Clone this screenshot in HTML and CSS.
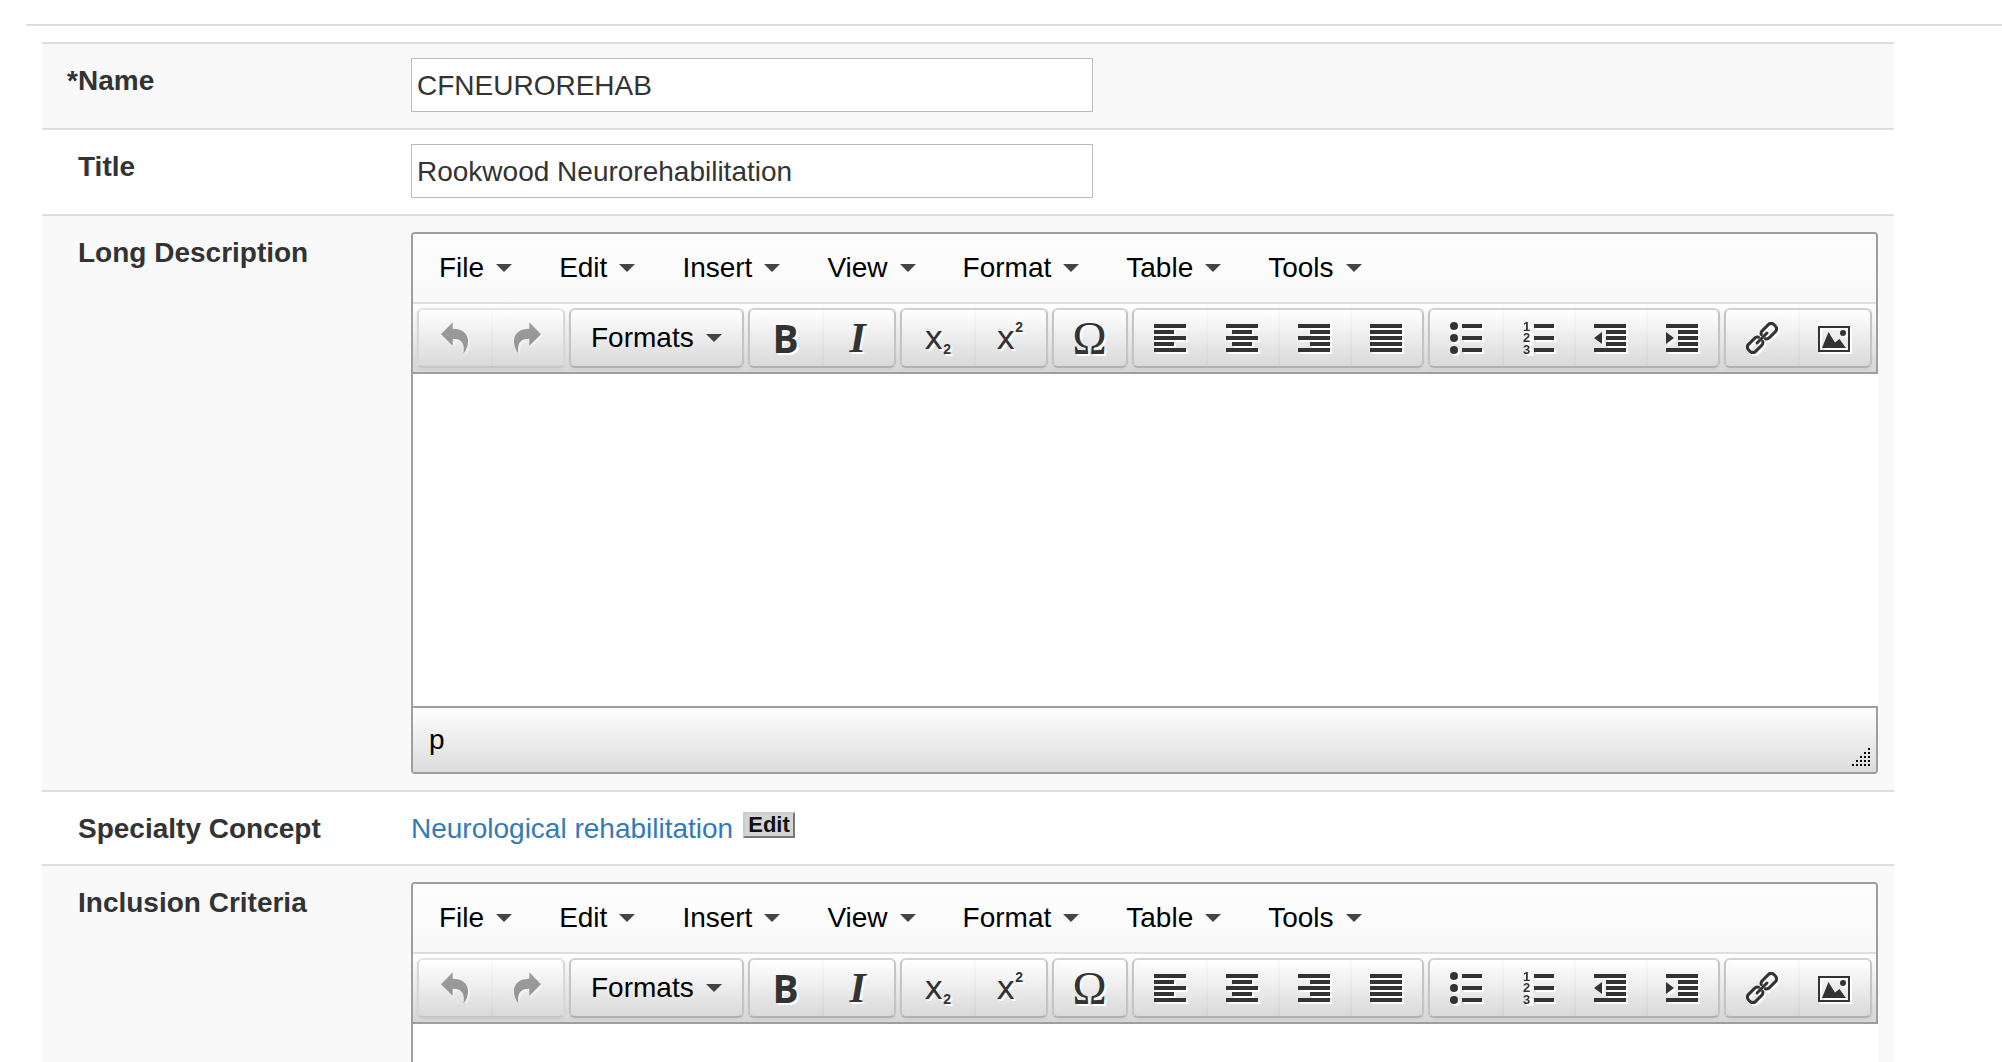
FILE: index.html
```html
<!DOCTYPE html>
<html lang="en">
<head>
<meta charset="utf-8">
<title>Service details</title>
<link rel="stylesheet" href="styles.css">
</head>
<body>
<svg class="sprite" aria-hidden="true">
  <symbol id="undo" viewBox="0 0 32 32"><path d="M2 12.3 13.7.3v6.4C22.500 6.700 29.300 11 29 19.500c0 4.500-1.700 8.500-4.500 11.800C26 23 24 16.700 13.700 16.700v7z"/></symbol>
  <symbol id="redo" viewBox="0 0 32 32"><path transform="matrix(-1 0 0 1 32 0)" d="M2 12.3 13.7.3v6.4C22.500 6.700 29.300 11 29 19.500c0 4.500-1.700 8.500-4.500 11.800C26 23 24 16.700 13.700 16.700v7z"/></symbol>
  <symbol id="left" viewBox="0 0 32 32"><path d="M0 2h32v4H0zM0 8h20v4H0zM0 14h32v4H0zM0 20h20v4H0zM0 26h32v4H0z"/></symbol>
  <symbol id="center" viewBox="0 0 32 32"><path d="M0 2h32v4H0zM6 8h20v4H6zM0 14h32v4H0zM6 20h20v4H6zM0 26h32v4H0z"/></symbol>
  <symbol id="right" viewBox="0 0 32 32"><path d="M0 2h32v4H0zM12 8h20v4H12zM0 14h32v4H0zM12 20h20v4H12zM0 26h32v4H0z"/></symbol>
  <symbol id="justify" viewBox="0 0 32 32"><path d="M0 2h32v4H0zM0 8h32v4H0zM0 14h32v4H0zM0 20h32v4H0zM0 26h32v4H0z"/></symbol>
  <symbol id="bullets" viewBox="0 0 32 32"><circle cx="4" cy="4" r="4"/><circle cx="4" cy="16" r="4"/><circle cx="4" cy="28" r="4"/><path d="M12 2h20v4H12zM12 14h20v4H12zM12 26h20v4H12z"/></symbol>
  <symbol id="numbers" viewBox="0 0 32 32"><text x="1" y="9">1</text><text x="1" y="20">2</text><text x="1" y="32">3</text><path d="M12 2h20v4H12zM12 14h20v4H12zM12 26h20v4H12z"/></symbol>
  <symbol id="outdent" viewBox="0 0 32 32"><path d="M0 2h32v4H0zM12 8h20v4H12zM12 14h20v4H12zM12 20h20v4H12zM0 26h32v4H0zM8 10v12L0 16z"/></symbol>
  <symbol id="indent" viewBox="0 0 32 32"><path d="M0 2h32v4H0zM12 8h20v4H12zM12 14h20v4H12zM12 20h20v4H12zM0 26h32v4H0zM0 10v12l8-6z"/></symbol>
  <symbol id="link" viewBox="0 0 32 32"><g fill="none" stroke="#333" stroke-width="3" stroke-linecap="round" transform="rotate(-45 16 16)"><path d="M14 19q-1 2-3.500 2H2q-4 0-4-5t4-5h8.500q2.500 0 3.500 2"/><path d="M18 19q1 2 3.500 2H30q4 0 4-5t-4-5h-8.500q-2.500 0-3.500 2"/><path d="M9 16h14"/></g></symbol>
  <symbol id="image" viewBox="0 0 32 32"><path fill-rule="evenodd" d="M0 4h32v26H0zM2 6v22h28V6z"/><circle cx="25" cy="11" r="3"/><path d="M4 26 10.500 10 17 20.500 21.500 17 28 26z"/></symbol>
  <symbol id="grip" viewBox="0 0 18 18"><path d="M16 0h2v2h-2zM12 4h2v2h-2zM16 4h2v2h-2zM8 8h2v2H8zM12 8h2v2h-2zM16 8h2v2h-2zM4 12h2v2H4zM8 12h2v2H8zM12 12h2v2h-2zM16 12h2v2h-2zM0 16h2v2H0zM4 16h2v2H4zM8 16h2v2H8zM12 16h2v2h-2zM16 16h2v2h-2z"/></symbol>
</svg>

<hr class="rule">
<form class="details">
  <div class="row">
    <label class="label" for="name"><span class="mark">*</span>Name</label>
    <input class="field" id="name" type="text" value="CFNEUROREHAB">
  </div>
  <div class="row">
    <label class="label" for="title"><span class="mark"></span>Title</label>
    <input class="field" id="title" type="text" value="Rookwood Neurorehabilitation">
  </div>
  <div class="row">
    <label class="label" for="description"><span class="mark"></span>Long Description</label>
    <div class="editor" data-field="description" data-path="p"></div>
  </div>
  <div class="row">
    <span class="label"><span class="mark"></span>Specialty Concept</span>
    <div class="concept"><a href="#concept">Neurological rehabilitation</a><button class="edit" type="button">Edit</button></div>
  </div>
  <div class="row">
    <label class="label" for="inclusion"><span class="mark"></span>Inclusion Criteria</label>
    <div class="editor" data-field="inclusion"></div>
  </div>
</form>

<template id="editor">
  <div class="menubar">
    <button type="button" class="menu">File</button>
    <button type="button" class="menu">Edit</button>
    <button type="button" class="menu">Insert</button>
    <button type="button" class="menu">View</button>
    <button type="button" class="menu">Format</button>
    <button type="button" class="menu">Table</button>
    <button type="button" class="menu">Tools</button>
  </div>
  <div class="toolbar">
    <div class="group disabled">
      <button type="button" class="tool" disabled aria-label="Undo"><svg class="icon"><use href="#undo"/></svg></button>
      <button type="button" class="tool" disabled aria-label="Redo"><svg class="icon"><use href="#redo"/></svg></button>
    </div>
    <div class="group"><button type="button" class="menu formats">Formats</button></div>
    <div class="group">
      <button type="button" class="tool bold">B</button>
      <button type="button" class="tool italic">I</button>
    </div>
    <div class="group">
      <button type="button" class="tool script">x<sub>2</sub></button>
      <button type="button" class="tool script">x<sup>2</sup></button>
    </div>
    <div class="group"><button type="button" class="tool omega">Ω</button></div>
    <div class="group">
      <button type="button" class="tool" aria-label="Align left"><svg class="icon"><use href="#left"/></svg></button>
      <button type="button" class="tool" aria-label="Align center"><svg class="icon"><use href="#center"/></svg></button>
      <button type="button" class="tool" aria-label="Align right"><svg class="icon"><use href="#right"/></svg></button>
      <button type="button" class="tool" aria-label="Justify"><svg class="icon"><use href="#justify"/></svg></button>
    </div>
    <div class="group">
      <button type="button" class="tool" aria-label="Bullet list"><svg class="icon"><use href="#bullets"/></svg></button>
      <button type="button" class="tool" aria-label="Numbered list"><svg class="icon"><use href="#numbers"/></svg></button>
      <button type="button" class="tool" aria-label="Decrease indent"><svg class="icon"><use href="#outdent"/></svg></button>
      <button type="button" class="tool" aria-label="Increase indent"><svg class="icon"><use href="#indent"/></svg></button>
    </div>
    <div class="group">
      <button type="button" class="tool" aria-label="Insert link"><svg class="icon"><use href="#link"/></svg></button>
      <button type="button" class="tool" aria-label="Insert image"><svg class="icon"><use href="#image"/></svg></button>
    </div>
  </div>
  <textarea class="content"></textarea>
  <div class="status"><span class="path"></span><svg class="grip"><use href="#grip"/></svg></div>
</template>
<script src="editor.js"></script>
</body>
</html>
```
FILE: styles.css
```css
* { box-sizing: border-box; }

body {
  margin: 0;
  height: 100vh;
  overflow: hidden;
  background: #fff;
  color: #333;
  font: 28px/42px "Liberation Sans", Arial, sans-serif;
}

button, input, textarea { font: inherit; }

.sprite { display: none; }

.rule {
  margin: 24px 0 16px 26px;
  border: 0;
  border-top: 2px solid #ddd;
}

.details { margin: 0 108px 0 42px; }

.row {
  display: grid;
  grid-template-columns: 369px minmax(0, 1fr);
  align-items: start;
  padding: 16px 16px 14px 0;
  border-top: 2px solid #ddd;
}

.row:nth-child(odd) { background: #f9f9f9; }

.label {
  display: flex;
  padding-left: 25px;
  font-weight: bold;
}

.mark { width: 11px; }

.field {
  width: 682px;
  max-width: 100%;
  height: 54px;
  margin: -2px 0 2px;
  padding: 2px 5px 0;
  border: 1px solid #bbb;
  background: #fff;
  color: #333;
}

.concept {
  display: flex;
  align-items: center;
  gap: 10px;
}

.concept a {
  color: #337ab7;
  text-decoration: none;
}

.edit {
  height: 26px;
  margin-bottom: 8px;
  padding: 0 3px;
  border: 2px solid;
  border-color: #ccc #777 #777 #ccc;
  background: #d4d4d4;
  color: #111;
  font-size: 22px;
  font-weight: bold;
  line-height: 22px;
}

.editor {
  margin-bottom: 2px;
  border: 2px solid #9e9e9e;
  border-radius: 4px;
  background: #fff;
}

.menubar {
  display: flex;
  gap: 3px;
  height: 70px;
  padding: 0 4px;
  border-bottom: 2px solid #ddd;
  border-radius: 2px 2px 0 0;
  background: linear-gradient(#fefefe, #f8f8f8);
}

.menu {
  display: flex;
  align-items: center;
  gap: 12px;
  padding: 0 22px;
  border: 0;
  background: none;
  color: #000;
}

.menu::after {
  content: "";
  border: 8px solid transparent;
  border-top-color: #444;
  border-bottom: 0;
}

.toolbar {
  display: flex;
  gap: 4px;
  height: 70px;
  padding: 4px;
  border-bottom: 2px solid #9e9e9e;
  background: linear-gradient(#fff, #d6d6d6);
}

.group {
  display: flex;
  height: 60px;
  border: 2px solid;
  border-color: #d2d2d2 #c4c4c4 #b1b1b1;
  border-radius: 6px;
  background: linear-gradient(#fff, #d9d9d9);
  box-shadow: 0 1px 3px rgba(0, 0, 0, 0.06);
}

.disabled { border-color: #e5e5e5 #d8d8d8 #c6c6c6; }

.formats { padding: 0 20px; }

.tool {
  display: flex;
  align-items: center;
  justify-content: center;
  width: 72px;
  height: 56px;
  padding: 0;
  border: 0;
  background: none;
  color: #333;
  text-shadow: 2px 2px 0 #fff;
}

.tool + .tool { box-shadow: inset 2px 0 0 rgba(0, 0, 0, 0.02); }

.icon {
  width: 32px;
  height: 32px;
  fill: #333;
  font: bold 13px/1 "Liberation Sans", Arial, sans-serif;
  filter: drop-shadow(2px 2px 0 #fff);
}

.disabled .icon { opacity: 0.45; }

.bold { font: bold 39px/56px "Open Sans", sans-serif; }
.italic { font: italic bold 42px/56px "Liberation Serif", serif; }
.omega { font: 46px/56px "Liberation Serif", serif; padding-top: 2px; }
.script { font: 32px/56px "DejaVu Sans", sans-serif; }

.script sub, .script sup {
  font: bold 14px/14px "Liberation Sans", Arial, sans-serif;
}

.script sub { margin-top: 22px; }
.script sup { margin-bottom: 22px; }

.content {
  display: block;
  width: calc(100% + 2px);
  height: 332px;
  margin: 0;
  padding: 16px;
  border: 0;
  background: #fff;
  resize: none;
}

.status {
  display: flex;
  align-items: center;
  justify-content: space-between;
  height: 66px;
  padding: 0 6px 0 16px;
  border-top: 2px solid #9e9e9e;
  background: linear-gradient(#fefefe, #dcdcdc);
  color: #000;
}

.grip {
  align-self: flex-end;
  width: 18px;
  height: 18px;
  margin-bottom: 6px;
}
```
FILE: editor.js
```js
const template = document.getElementById("editor");

document.querySelectorAll(".editor").forEach((editor) => {
  editor.append(template.content.cloneNode(true));
  editor.querySelector(".content").id = editor.dataset.field;
  editor.querySelector(".path").textContent = editor.dataset.path || "";
});
```
